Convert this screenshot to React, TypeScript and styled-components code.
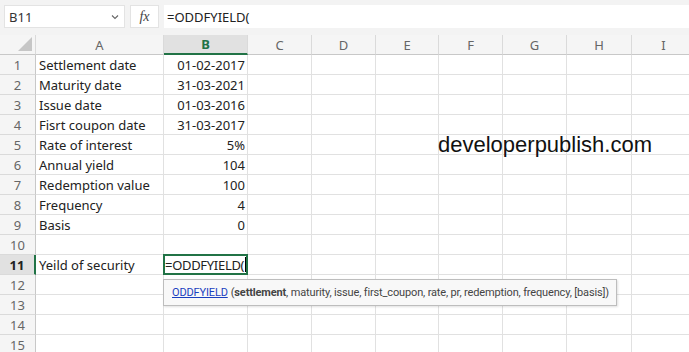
import styled, { createGlobalStyle } from "styled-components";

const GlobalStyle = createGlobalStyle`
  html, body {
    margin: 0;
    padding: 0;
    background: #ffffff;
  }
  body {
    font-family: "Noto Sans", "Open Sans", sans-serif;
    overflow: hidden;
  }
`;

const COLS = [36, 128, 84, 64, 64, 63, 64, 64, 65, 64];
const HEADERS = ["", "A", "B", "C", "D", "E", "F", "G", "H", "I"];

const rows: [string, string][] = [
  ["Settlement date", "01-02-2017"],
  ["Maturity date", "31-03-2021"],
  ["Issue date", "01-03-2016"],
  ["Fisrt coupon date", "31-03-2017"],
  ["Rate of interest", "5%"],
  ["Annual yield", "104"],
  ["Redemption value", "100"],
  ["Frequency", "4"],
  ["Basis", "0"],
  ["", ""],
  ["Yeild of security", "=ODDFYIELD("],
  ["", ""],
  ["", ""],
  ["", ""],
  ["", ""],
];

const Page = styled.div`
  width: 689px;
  height: 352px;
  overflow: hidden;
  background: #fff;
`;

const TopBar = styled.div`
  display: flex;
  align-items: center;
  gap: 5px;
  height: 35px;
  padding: 0 0 2px 4px;
  box-sizing: border-box;
  background: #f3f3f3;
`;

const NameBox = styled.div`
  display: flex;
  align-items: center;
  justify-content: space-between;
  width: 121px;
  height: 23px;
  box-sizing: border-box;
  padding: 0 5px 0 4px;
  background: #fff;
  border: 1px solid #e3e3e3;
  font-size: 13px;
  color: #333;
`;

const FxBox = styled.div`
  display: flex;
  align-items: center;
  justify-content: center;
  width: 29px;
  height: 23px;
  box-sizing: border-box;
  background: #fff;
  border: 1px solid #e3e3e3;
  font-family: "Liberation Serif", serif;
  font-style: italic;
  font-size: 14px;
  color: #444;
`;

const FormulaInput = styled.div`
  flex: 1;
  display: flex;
  align-items: center;
  height: 23px;
  padding-left: 3px;
  background: #fff;
  font-size: 13px;
  color: #222;
`;

const Sheet = styled.div`
  position: relative;
  display: grid;
  grid-template-columns: ${COLS.map((c) => `${c}px`).join(" ")};
  grid-auto-rows: 20px;
`;

const ColHead = styled.div<{ $active?: boolean }>`
  display: flex;
  align-items: center;
  justify-content: center;
  box-sizing: border-box;
  background: ${(p) => (p.$active ? "#e1e1e1" : "#f5f5f5")};
  border-right: 1px solid #dadada;
  border-bottom: ${(p) => (p.$active ? "2px solid #217346" : "1px solid #c8c8c8")};
  font-size: 13px;
  font-weight: ${(p) => (p.$active ? 700 : 400)};
  color: ${(p) => (p.$active ? "#217346" : "#666")};
`;

const Corner = styled.div`
  position: relative;
  background: #f5f5f5;
  border-right: 1px solid #dadada;
  border-bottom: 1px solid #c8c8c8;
  box-sizing: border-box;
  &::after {
    content: "";
    position: absolute;
    right: 3px;
    bottom: 3px;
    border-style: solid;
    border-width: 0 0 14px 14px;
    border-color: transparent transparent #c6c6c6 transparent;
  }
`;

const RowHead = styled.div<{ $active?: boolean }>`
  display: flex;
  align-items: center;
  justify-content: center;
  box-sizing: border-box;
  background: ${(p) => (p.$active ? "#e1e1e1" : "#f5f5f5")};
  border-bottom: 1px solid #dadada;
  border-right: ${(p) => (p.$active ? "2px solid #217346" : "1px solid #c8c8c8")};
  font-size: 13px;
  font-weight: ${(p) => (p.$active ? 700 : 400)};
  color: ${(p) => (p.$active ? "#222" : "#666")};
`;

const Cell = styled.div<{ $right?: boolean }>`
  display: flex;
  align-items: center;
  justify-content: ${(p) => (p.$right ? "flex-end" : "flex-start")};
  box-sizing: border-box;
  padding: 0 2px 0 3px;
  border-right: 1px solid #e1e1e1;
  border-bottom: 1px solid #e1e1e1;
  font-size: 13px;
  color: #222;
  white-space: nowrap;
  overflow: visible;
`;

const EditCell = styled.div`
  display: flex;
  align-items: center;
  box-sizing: border-box;
  margin: -1px 0 0 -1px;
  height: 21px;
  padding-left: 0;
  border: 2px solid #217346;
  font-size: 13px;
  letter-spacing: -0.3px;
  color: #222;
  white-space: nowrap;
  background: #fff;
  z-index: 1;
`;

const Caret = styled.span`
  display: inline-block;
  width: 1px;
  height: 15px;
  margin-left: 1px;
  background: #000;
`;

const Watermark = styled.div`
  position: absolute;
  left: 438px;
  top: 97px;
  font-family: "Liberation Sans", Arial, sans-serif;
  font-size: 22px;
  color: #111;
  pointer-events: none;
`;

const Tooltip = styled.div`
  position: absolute;
  left: 163px;
  top: 244px;
  width: 454px;
  height: 27px;
  box-sizing: border-box;
  display: flex;
  align-items: center;
  padding-left: 8px;
  background: #f8f8f8;
  border: 1px solid #bdbdbd;
  box-shadow: 1px 1px 2px rgba(0, 0, 0, 0.12);
  font-family: Roboto, "Noto Sans", sans-serif;
  font-size: 11px;
  letter-spacing: -0.15px;
  color: #444;
  white-space: pre;
  z-index: 2;
`;

const FnLink = styled.span`
  color: #1a3fbf;
  text-decoration: underline;
  margin-right: 3px;
`;

const Chevron = () => (
  <svg width="8" height="6" viewBox="0 0 8 6">
    <path d="M1 1.5 L4 4.5 L7 1.5" fill="none" stroke="#666" strokeWidth="1.1" />
  </svg>
);

const App: React.FC = () => (
  <Page>
    <GlobalStyle />
    <TopBar>
      <NameBox>
        <span>B11</span>
        <Chevron />
      </NameBox>
      <FxBox>fx</FxBox>
      <FormulaInput>=ODDFYIELD(</FormulaInput>
    </TopBar>
    <Sheet>
      <Corner />
      {HEADERS.slice(1).map((h) => (
        <ColHead key={h} $active={h === "B"}>
          {h}
        </ColHead>
      ))}
      {rows.map(([a, b], i) => {
        const n = i + 1;
        const editing = n === 11;
        return [
          <RowHead key={`r${n}`} $active={editing}>
            {n}
          </RowHead>,
          <Cell key={`a${n}`}>{a}</Cell>,
          editing ? (
            <EditCell key={`b${n}`}>
              {b}
              <Caret />
            </EditCell>
          ) : (
            <Cell key={`b${n}`} $right>
              {b}
            </Cell>
          ),
          ...HEADERS.slice(3).map((h) => <Cell key={`${h}${n}`} />),
        ];
      })}
      <Watermark>developerpublish.com</Watermark>
      <Tooltip>
        <FnLink>ODDFYIELD</FnLink>(<b>settlement</b>, maturity, issue, first_coupon, rate, pr, redemption, frequency, [basis])
      </Tooltip>
    </Sheet>
  </Page>
);

export default App;
